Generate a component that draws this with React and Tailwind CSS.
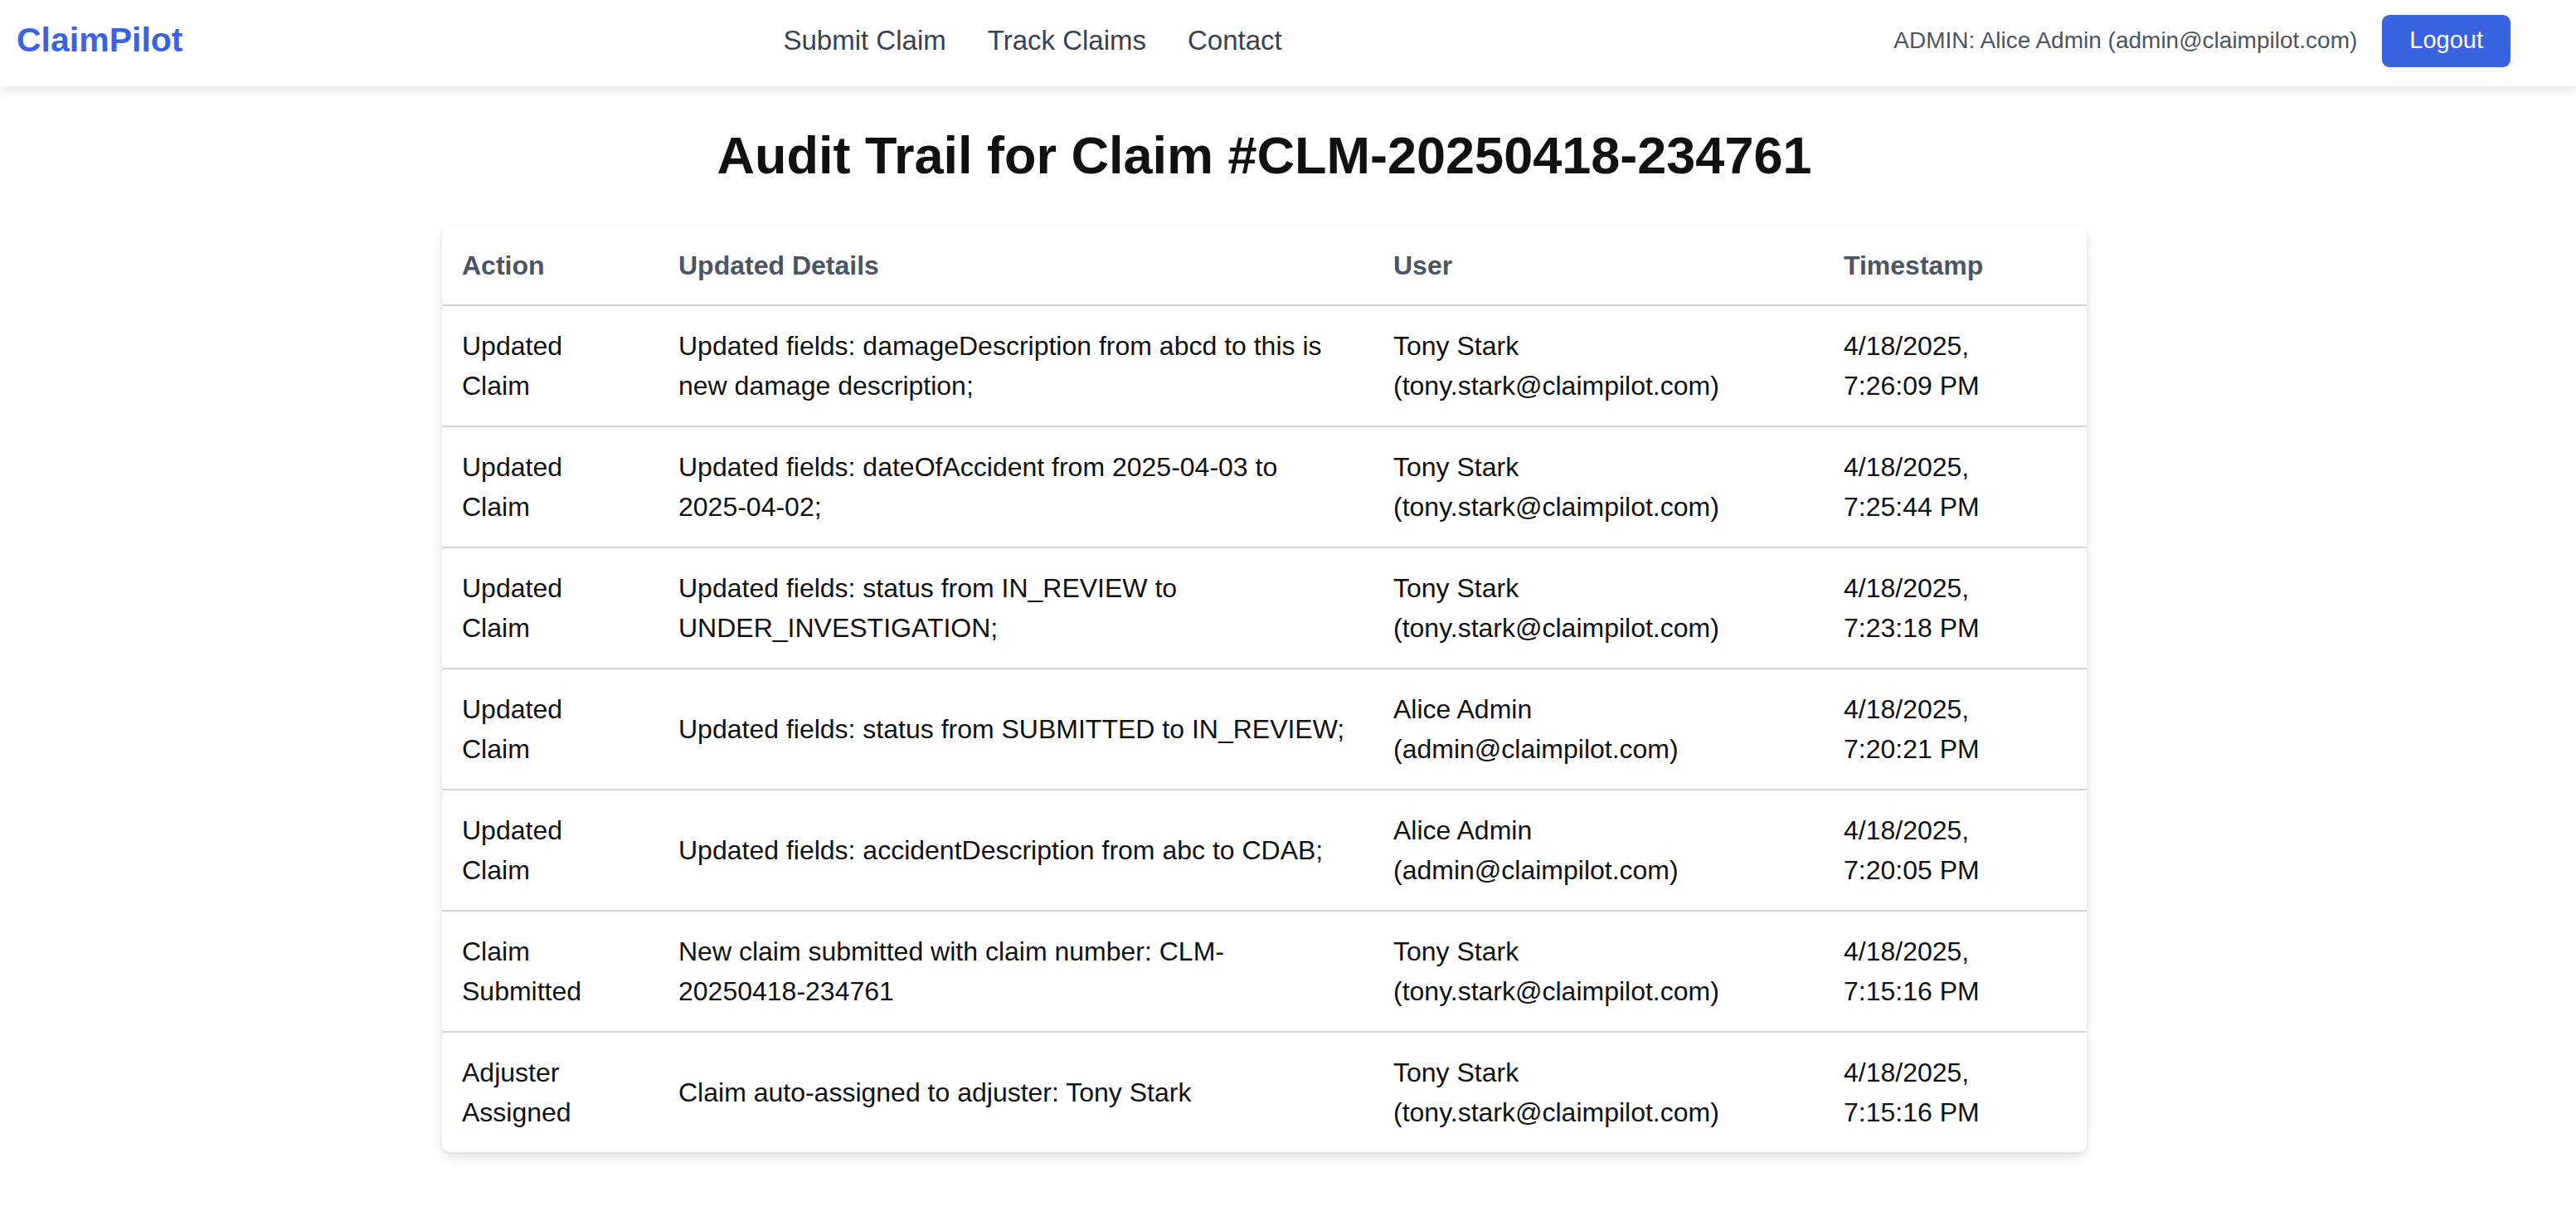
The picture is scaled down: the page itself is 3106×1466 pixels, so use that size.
import React from "react";

const nw = (t) => <span className="whitespace-nowrap">{t}</span>;

const rows = [
  {
    action: "Updated Claim",
    details: "Updated fields: damageDescription from abcd to this is new damage description;",
    user: "Tony Stark (tony.stark@claimpilot.com)",
    time: "4/18/2025, 7:26:09 PM",
  },
  {
    action: "Updated Claim",
    details: (
      <>
        Updated fields: dateOfAccident from {nw("2025-04-03")} to {nw("2025-04-02;")}
      </>
    ),
    user: "Tony Stark (tony.stark@claimpilot.com)",
    time: "4/18/2025, 7:25:44 PM",
  },
  {
    action: "Updated Claim",
    details: "Updated fields: status from IN_REVIEW to UNDER_INVESTIGATION;",
    user: "Tony Stark (tony.stark@claimpilot.com)",
    time: "4/18/2025, 7:23:18 PM",
  },
  {
    action: "Updated Claim",
    details: "Updated fields: status from SUBMITTED to IN_REVIEW;",
    user: "Alice Admin (admin@claimpilot.com)",
    time: "4/18/2025, 7:20:21 PM",
  },
  {
    action: "Updated Claim",
    details: "Updated fields: accidentDescription from abc to CDAB;",
    user: "Alice Admin (admin@claimpilot.com)",
    time: "4/18/2025, 7:20:05 PM",
  },
  {
    action: "Claim Submitted",
    details: <>New claim submitted with claim number: CLM-{nw("20250418-234761")}</>,
    user: "Tony Stark (tony.stark@claimpilot.com)",
    time: "4/18/2025, 7:15:16 PM",
  },
  {
    action: "Adjuster Assigned",
    details: "Claim auto-assigned to adjuster: Tony Stark",
    user: "Tony Stark (tony.stark@claimpilot.com)",
    time: "4/18/2025, 7:15:16 PM",
  },
];

function Navbar() {
  return (
    <nav className="relative z-10 flex h-[104px] items-center bg-white pb-[6px] pl-[20px] pr-[79px] shadow-[0_4px_14px_rgba(0,0,0,0.12)]">
      <a className="text-[41px] font-bold text-[#3a63e2]">ClaimPilot</a>
      <ul className="ml-[724px] flex items-center gap-[50px] text-[33px] text-[#374151]">
        <li>Submit Claim</li>
        <li>Track Claims</li>
        <li>Contact</li>
      </ul>
      <div className="ml-auto flex items-center gap-[30px]">
        <span className="text-[28px] text-[#4b5563]">ADMIN: Alice Admin (admin@claimpilot.com)</span>
        <button className="h-[63px] rounded-[9px] bg-[#3a63e2] px-[33px] text-[29px] text-white">
          Logout
        </button>
      </div>
    </nav>
  );
}

export default function App() {
  return (
    <div className="min-h-screen bg-white font-['Liberation_Sans',Arial,sans-serif] text-[#111111]">
      <Navbar />
      <main className="pr-[57px]">
        <div className="mx-auto flex w-[1983px] flex-col items-center pt-[43px]">
          <h1 className="mb-[46px] text-[63px] font-bold leading-[80px] text-[#111111]">
            Audit Trail for Claim #CLM-20250418-234761
          </h1>
          <div className="w-full overflow-hidden rounded-[10px] bg-white shadow-[0_6px_14px_rgba(0,0,0,0.10),0_2px_6px_rgba(0,0,0,0.06)]">
            <table className="w-full table-fixed border-collapse text-left text-[32px] leading-[48px]">
              <colgroup>
                <col className="w-[261px]" />
                <col className="w-[862px]" />
                <col className="w-[543px]" />
                <col className="w-[317px]" />
              </colgroup>
              <thead>
                <tr className="border-b-2 border-[#d1d5db]">
                  <th className="px-[24px] py-[23px] font-bold text-[#4b5563]">Action</th>
                  <th className="px-[24px] py-[23px] font-bold text-[#4b5563]">Updated Details</th>
                  <th className="px-[24px] py-[23px] font-bold text-[#4b5563]">User</th>
                  <th className="px-[24px] py-[23px] font-bold text-[#4b5563]">Timestamp</th>
                </tr>
              </thead>
              <tbody>
                {rows.map((row, i) => (
                  <tr
                    key={i}
                    className={i < rows.length - 1 ? "border-b-2 border-[#d1d5db]" : ""}
                  >
                    <td className="px-[24px] py-[24px] align-middle">
                      <span className="block max-w-[170px]">{row.action}</span>
                    </td>
                    <td className="px-[24px] py-[24px] align-middle">{row.details}</td>
                    <td className="px-[24px] py-[24px] align-middle">{row.user}</td>
                    <td className="px-[24px] py-[24px] align-middle">
                      <span className="block max-w-[200px]">{row.time}</span>
                    </td>
                  </tr>
                ))}
              </tbody>
            </table>
          </div>
        </div>
      </main>
    </div>
  );
}
